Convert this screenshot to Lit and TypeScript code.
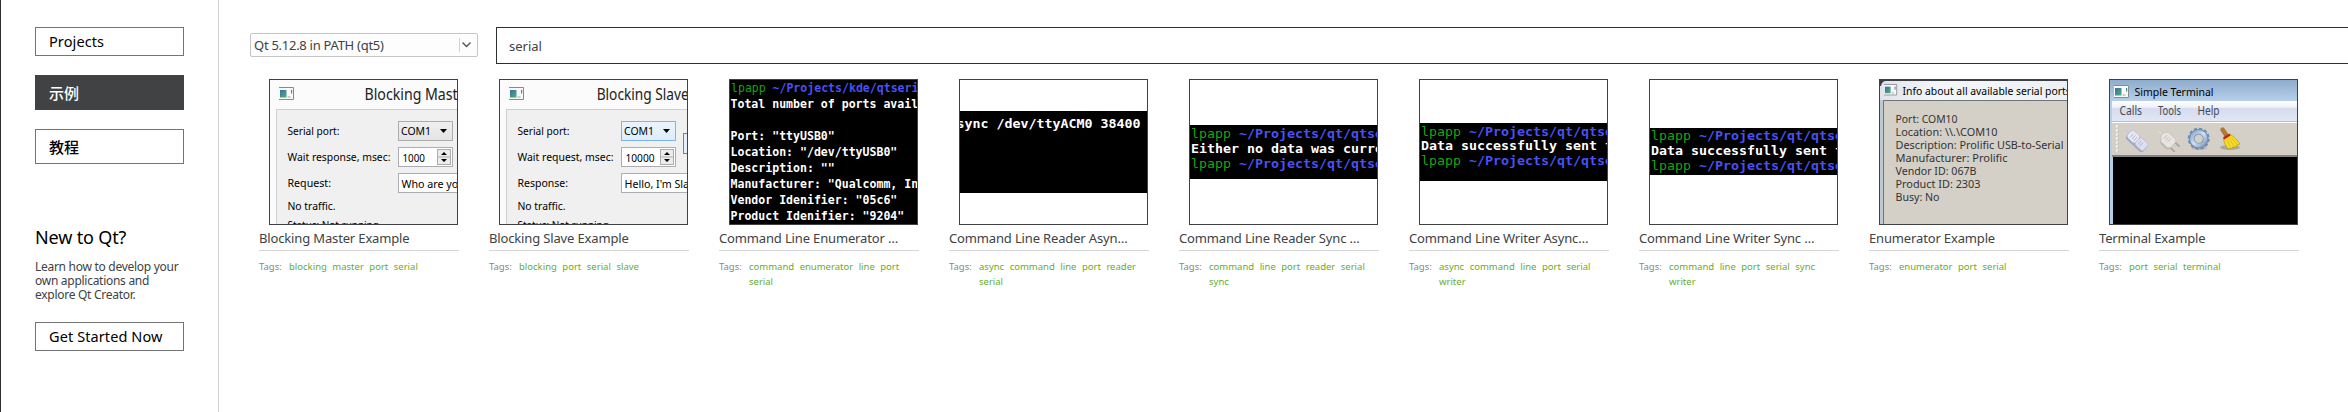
import { LitElement, html, svg, css } from "lit";
import { customElement, property } from "lit/decorators.js";

interface Example {
  title: string;
  tags: string[][];
  art: string;
}

const EXAMPLES: Example[] = [
  { title: "Blocking Master Example", tags: [["blocking", "master", "port", "serial"]], art: "master" },
  { title: "Blocking Slave Example", tags: [["blocking", "port", "serial", "slave"]], art: "slave" },
  { title: "Command Line Enumerator …", tags: [["command", "enumerator", "line", "port"], ["serial"]], art: "enum" },
  { title: "Command Line Reader Asyn…", tags: [["async", "command", "line", "port", "reader"], ["serial"]], art: "readasync" },
  { title: "Command Line Reader Sync …", tags: [["command", "line", "port", "reader", "serial"], ["sync"]], art: "readsync" },
  { title: "Command Line Writer Async…", tags: [["async", "command", "line", "port", "serial"], ["writer"]], art: "writeasync" },
  { title: "Command Line Writer Sync …", tags: [["command", "line", "port", "serial", "sync"], ["writer"]], art: "writesync" },
  { title: "Enumerator Example", tags: [["enumerator", "port", "serial"]], art: "info" },
  { title: "Terminal Example", tags: [["port", "serial", "terminal"]], art: "terminal" },
];

const label = (x: number, y: number, w: number, s: string, cls = "win") =>
  svg`<text class=${cls} x=${x} y=${y} textLength=${w} lengthAdjust="spacingAndGlyphs">${s}</text>`;

const mono = (x: number, y: number, pitch: number, s: string, cls: string) =>
  svg`<text class=${cls} x=${x} y=${y} textLength=${pitch * s.length} lengthAdjust="spacingAndGlyphs">${s}</text>`;

const windowIcon = (x: number, y: number) => svg`
  <g transform="translate(${x} ${y})">
    <rect x="0" y="0" width="15" height="13" fill="#f9f9f9"></rect>
    <path d="M0 .5H14.500V12.500H0" fill="none" stroke="#868a8d"></path>
    <rect x="1" y="3" width="6.500" height="7.500" fill="url(#pic)"></rect>
    <rect x="12" y="3" width="1.200" height="3.500" fill="url(#pic)"></rect>
    <rect x="8.500" y="9" width="3" height="2" fill="#cfcfcf"></rect>
  </g>`;

const serialDialog = (o: {
  title: string; titleX: number; titleW: number; wait: string; waitW: number; value: string; valueW: number;
  third: string; thirdW: number; text: string; textW: number; fx: number; active: boolean;
}) => svg`
  <rect width="187" height="144" fill="#fbfbfb"></rect>
  <rect x="6.5" y="29.5" width="200" height="130" fill="#f0f0f0" stroke="#cfcfcf"></rect>
  ${windowIcon(9, 7)}
  ${label(o.titleX, 20, o.titleW, o.title, "caption")}
  ${label(17.5, 54.7, 52, "Serial port:")}
  ${label(17.5, 81, o.waitW, o.wait)}
  ${label(17.5, 107, o.thirdW, o.third)}
  ${label(17.5, 129.7, 48, "No traffic.")}
  ${label(17.5, 148.5, 94, "Status: Not running.")}
  <g transform="translate(${o.fx} 0)">
    <rect x="0.5" y="41.5" width="54" height="19" fill=${o.active ? "url(#hot)" : "url(#cold)"} stroke=${o.active ? "#7eb4ea" : "#acacac"}></rect>
    ${label(3, 55, 30, "COM1")}
    <path d="M42 49h7l-3.5 4z" fill="#000"></path>
    <rect x="0.5" y="67.5" width="54" height="19" fill="#fff" stroke="#abadb3"></rect>
    ${label(4.5, 82, o.valueW, o.value)}
    <rect x="39.5" y="69.5" width="13" height="15" fill="#ececec" stroke="#acacac"></rect>
    <path d="M39.500 77h13" stroke="#acacac"></path>
    <path d="M43 75h6l-3-3zM43 79h6l-3 3z" fill="#000"></path>
    <rect x="0.5" y="93.500" width="100" height="19" fill="#fff" stroke="#abadb3"></rect>
    ${label(3.5, 108, o.textW, o.text)}
  </g>
  ${o.active ? svg`<rect x="183.5" y="53.5" width="30" height="20" fill="#e5eff9" stroke="#3c8ce0"></rect>` : null}`;

const shellBand = (top: number, bottom: number, lines: number[], message: string) => svg`
  <rect width="187" height="144" fill="#fff"></rect>
  <rect y=${top} width="187" height=${bottom - top} fill="#000"></rect>
  ${mono(1, lines[0], 8, "lpapp", "sh green")}
  ${mono(49, lines[0], 8, "~/Projects/qt/qtserial", "sh blue bold")}
  ${mono(1, lines[1], 8, message, "sh white bold")}
  ${mono(1, lines[2], 8, "lpapp", "sh green")}
  ${mono(49, lines[2], 8, "~/Projects/qt/qtserial", "sh blue bold")}`;

const TTY = 6.95;

const art: Record<string, () => unknown> = {
  master: () => serialDialog({
    title: "Blocking Master", titleX: 94.5, titleW: 107, wait: "Wait response, msec:", waitW: 103, value: "1000", valueW: 22.5,
    third: "Request:", thirdW: 43.5, text: "Who are you?", textW: 68, fx: 128, active: false,
  }),
  slave: () => serialDialog({
    title: "Blocking Slave", titleX: 96.7, titleW: 92, wait: "Wait request, msec:", waitW: 96, value: "10000", valueW: 29,
    third: "Response:", thirdW: 50.5, text: "Hello, I'm Slave", textW: 76, fx: 121, active: true,
  }),
  enum: () => svg`
    <rect width="187" height="144" fill="#000"></rect>
    ${mono(1, 12, TTY, "lpapp", "tty green")}
    ${mono(42.500, 12, TTY, "~/Projects/kde/qtserialport", "tty blue bold")}
    ${mono(0.5, 28, TTY, "Total number of ports available", "tty white bold")}
    ${mono(0.5, 60, TTY, 'Port: "ttyUSB0"', "tty white bold")}
    ${mono(0.5, 76, TTY, 'Location: "/dev/ttyUSB0"', "tty white bold")}
    ${mono(0.5, 92, TTY, 'Description: ""', "tty white bold")}
    ${mono(0.5, 108, TTY, 'Manufacturer: "Qualcomm, Inc', "tty white bold")}
    ${mono(0.5, 124, TTY, 'Vendor Idenifier: "05c6"', "tty white bold")}
    ${mono(0.5, 140, TTY, 'Product Idenifier: "9204"', "tty white bold")}`,
  readasync: () => svg`
    <rect width="187" height="144" fill="#fff"></rect>
    <rect y="31" width="187" height="82" fill="#000"></rect>
    ${mono(-3.500, 47.5, 8, "sync /dev/ttyACM0 38400", "sh white bold")}`,
  readsync: () => shellBand(45, 99, [58.3, 73, 88], "Either no data was currently"),
  writeasync: () => shellBand(43, 101, [55.5, 70.3, 85.3], "Data successfully sent to"),
  writesync: () => shellBand(48, 95, [60.3, 75.3, 90.3], "Data successfully sent to"),
  info: () => svg`
    <rect width="187" height="144" fill="url(#aero)"></rect>
    <path d="M0 6V0H187V1H6Q2 1 1 6z" fill="#3c4045"></path>
    <rect y="20" width="4" height="124" fill="#bfc8d2"></rect>
    <rect x="4" y="21" width="183" height="123" fill="#d4d0c8"></rect>
    <path d="M3.500 144V20.500H187" fill="none" stroke="#6f7478"></path>
    <g transform="translate(4 4) scale(.88)">${windowIcon(0, 0)}</g>
    ${label(22.500, 14.700, 171, "Info about all available serial ports.")}
    ${label(15.500, 42.700, 62, "Port: COM10", "info")}
    ${label(15.500, 55.700, 102, "Location: \\\\.\\COM10", "info")}
    ${label(15.500, 68.700, 168, "Description: Prolific USB-to-Serial", "info")}
    ${label(15.500, 81.700, 112, "Manufacturer: Prolific", "info")}
    ${label(15.500, 94.700, 81, "Vendor ID: 067B", "info")}
    ${label(15.500, 107.700, 85, "Product ID: 2303", "info")}
    ${label(15.500, 120.700, 44, "Busy: No", "info")}`,
  terminal: () => svg`
    <rect width="187" height="144" fill="#b4cde8"></rect>
    <rect width="187" height="22" fill="url(#sky)"></rect>
    ${windowIcon(4, 5)}
    ${label(24.500, 16, 79, "Simple Terminal")}
    <rect x="2" y="21" width="185" height="21" fill="url(#menu)"></rect>
    ${label(9.500, 34.700, 22.500, "Calls", "info menu")}
    ${label(48, 34.700, 23, "Tools", "info menu")}
    ${label(87.500, 34.700, 22, "Help", "info menu")}
    <rect x="2" y="41" width="185" height="1" fill="#b9bed0"></rect>
    <rect x="2" y="42" width="185" height="1" fill="#fff"></rect>
    <rect x="2" y="43" width="185" height="33" fill="#d4d0c8"></rect>
    <path d="M7 45.500V73" stroke="#fff" stroke-width="2" stroke-dasharray="2 2"></path>
    <path d="M8 46.500V73" stroke="#a5a29b" stroke-width="1" stroke-dasharray="1 3"></path>
    <rect x="2" y="75" width="185" height="2" fill="#85837f"></rect>
    <rect x="3" y="77" width="184" height="67" fill="#000"></rect>
    <path d="M16 50l3 3" stroke="#c9cadb" stroke-width="1.500"></path>
    <g transform="translate(27 61) rotate(43)">
      <rect x="-11" y="-4" width="22.500" height="10" rx="2.500" fill="#a3a5c2"></rect>
      <rect x="-11" y="-5.500" width="11" height="9.500" rx="2.500" fill="#e9eaf5" stroke="#b5b7d0" stroke-width=".7"></rect>
      <rect x="0" y="-5.500" width="11" height="9.500" rx="2" fill="#dfe0ef" stroke="#b5b7d0" stroke-width=".7"></rect>
      <path d="M-7.500-3v5M-5-3v5M-2.500-3v5M3-3v5M5.500-3v5" stroke="#aaadc8" stroke-width=".9"></path>
    </g>
    <path d="M48 51l4 3" stroke="#dedbd6" stroke-width="1.500"></path>
    <g transform="translate(58 60) rotate(43)">
      <path d="M5-3h8M5 4h8" stroke="#a8a5a0" stroke-width="1.800"></path>
      <path d="M-8-3l3-3H5l2 2V6l-2 2H-3l-5-6z" fill="#bbb7b0"></path>
      <path d="M-8-3l3-3H5l2 2V4L5 6H-4l-4-4z" fill="#e8e5e0" stroke="#c3bfb8" stroke-width=".7"></path>
      <path d="M-4-3v5M-1.500-3v5M1-3v5" stroke="#bfbbb5" stroke-width=".9"></path>
    </g>
    <ellipse cx="89" cy="68" rx="8" ry="2" fill="#aaa8a2" opacity=".6"></ellipse>
    <circle cx="88.700" cy="58.700" r="9.500" fill="none" stroke="#6f8db5" stroke-width="3" stroke-dasharray="3.100 1.874"></circle>
    <circle cx="88.700" cy="58.700" r="7" fill="none" stroke="#6f8db5" stroke-width="5.600"></circle>
    <circle cx="88.700" cy="58.700" r="6.800" fill="none" stroke="url(#steel)" stroke-width="3.800"></circle>
    <ellipse cx="120" cy="67.500" rx="10" ry="2.500" fill="#999589" opacity=".7"></ellipse>
    <path d="M112.500 49.500l4 6" stroke="#b07a35" stroke-width="4.500" stroke-linecap="round"></path>
    <path d="M113.500 59l7-4.500q5 3 9.500 9.500l-3 1-1 2-3 0-2 2-4-1q-3-5-3.500-9z" fill="#f6dc2a" stroke="#b99a0b" stroke-width=".7"></path>
    <path d="M117 60l4 8M119.500 59l5 8M121.500 58l6 7" stroke="#d3b312" stroke-width=".7"></path>
    <path d="M113.500 58.500l6.500-4" stroke="#c51d1d" stroke-width="2.500"></path>`,
};

@customElement("example-thumb")
class ExampleThumb extends LitElement {
  @property() kind = "";
  static styles = css`
    :host { display: block; }
    svg { display: block; width: 187px; height: 144px; }
    text { white-space: pre; }
    .win { font: 11px "Noto Sans", sans-serif; fill: #000; }
    .caption { font: 15.5px "Noto Sans", sans-serif; fill: #222; }
    .info { font: 11px "Noto Sans", sans-serif; fill: #333; }
    .menu { font-size: 12px; fill: #444a58; }
    .tty { font: 11.600px "DejaVu Sans Mono", monospace; }
    .sh { font: 13px "DejaVu Sans Mono", monospace; }
    .bold { font-weight: bold; }
    .green { fill: #18a418; }
    .blue { fill: #4a50f4; }
    .white { fill: #fff; }
  `;
  render() {
    return html`<svg viewBox="0 0 187 144">
      <defs>
        <linearGradient id="pic" x2="1" y2="1"><stop stop-color="#3a6ea8"></stop><stop offset="1" stop-color="#4fae7c"></stop></linearGradient>
        <linearGradient id="cold" x2="0" y2="1"><stop stop-color="#f0f0f0"></stop><stop offset="1" stop-color="#e3e3e3"></stop></linearGradient>
        <linearGradient id="hot" x2="0" y2="1"><stop stop-color="#ecf4fc"></stop><stop offset="1" stop-color="#dcecfc"></stop></linearGradient>
        <linearGradient id="aero"><stop stop-color="#dfe4ea"></stop><stop offset=".3" stop-color="#f4f6f8"></stop><stop offset="1" stop-color="#eef1f4"></stop></linearGradient>
        <linearGradient id="sky" x2="0" y2="1"><stop stop-color="#8eaccd"></stop><stop offset="1" stop-color="#b8d1ec"></stop></linearGradient>
        <linearGradient id="menu" x2="0" y2="1"><stop stop-color="#fff"></stop><stop offset=".3" stop-color="#eef1f9"></stop><stop offset=".36" stop-color="#d6dcee"></stop><stop offset="1" stop-color="#e3e7f6"></stop></linearGradient>
        <linearGradient id="steel" x2="1" y2="1"><stop stop-color="#8fa9cb"></stop><stop offset=".5" stop-color="#d3dfed"></stop><stop offset="1" stop-color="#7f9bc1"></stop></linearGradient>
      </defs>
      ${art[this.kind]?.()}
    </svg>`;
  }
}

@customElement("example-card")
class ExampleCard extends LitElement {
  @property({ attribute: false }) item!: Example;
  static styles = css`
    :host { display: block; width: 200px; }
    .frame { margin-left: 10px; width: 187px; height: 144px; border: 1px solid #404244; overflow: hidden; }
    .title { height: 25px; line-height: 27px; font-size: 13px; letter-spacing: -0.15px; color: #404244; white-space: nowrap; border-bottom: 1px solid #d6d6d6; }
    .tags { display: flex; gap: 7px; margin-top: 8px; font-size: 9.5px; line-height: 15px; white-space: nowrap; }
    .label { color: #868788; width: 23px; }
    .row { display: flex; gap: 5.5px; color: #67ac2c; }
  `;
  render() {
    return html`
      <div class="frame"><example-thumb .kind=${this.item.art}></example-thumb></div>
      <div class="title">${this.item.title}</div>
      <div class="tags">
        <span class="label">Tags:</span>
        <div>${this.item.tags.map((r) => html`<div class="row">${r.map((t) => html`<span>${t}</span>`)}</div>`)}</div>
      </div>`;
  }
}

@customElement("app-root")
class AppRoot extends LitElement {
  static styles = css`
    :host { display: flex; height: 412px; background: #fff; overflow: hidden; box-sizing: border-box; border-left: 1px solid #2e2f30;
      font-family: "Noto Sans", "Noto Sans CJK SC", sans-serif; color: #404244; }
    .side { box-sizing: border-box; width: 218px; flex: none; padding: 27px 34px 0; border-right: 1px solid #d0d0d0; }
    .btn { box-sizing: border-box; width: 149px; height: 29px; border: 1px solid #727476; padding-left: 13px; line-height: 27px; font-size: 14.5px; letter-spacing: 0.1px; color: #000; white-space: nowrap; }
    .tall { height: 35px; line-height: 34px; margin-top: 19px; font-size: 15px; letter-spacing: 0; font-weight: 500; }
    .on { background: #404244; border-color: #404244; color: #fff; }
    .new { margin-top: 60px; line-height: 26px; font-size: 18px; letter-spacing: -0.15px; color: #000; white-space: nowrap; }
    .about { margin: 10px 0 20px; font-size: 12px; letter-spacing: -0.28px; line-height: 14px; white-space: nowrap; }
    .main { flex: none; width: 2129px; }
    .bar { display: flex; padding: 27px 0 0 31px; gap: 18px; }
    .select { box-sizing: border-box; width: 228px; height: 24px; margin-top: 6px; border: 1px solid #c4c6c6; border-radius: 2px; background: #fcfdfc;
      display: flex; align-items: center; justify-content: space-between; padding: 0 6px 0 3px; font-size: 13px; letter-spacing: -0.27px; }
    .search { box-sizing: border-box; flex: 1; height: 37px; border: 1px solid #2e2f30; border-right: 0; padding-left: 12px; line-height: 36px; font-size: 13px; }
    .cards { display: flex; gap: 30px; padding: 15px 0 0 40px; }
  `;
  render() {
    return html`
      <div class="side">
        <div class="btn">Projects</div>
        <div class="btn tall on">示例</div>
        <div class="btn tall">教程</div>
        <div class="new">New to Qt?</div>
        <div class="about">Learn how to develop your<br>own applications and<br>explore Qt Creator.</div>
        <div class="btn">Get Started Now</div>
      </div>
      <div class="main">
        <div class="bar">
          <div class="select">
            <span>Qt 5.12.8 in PATH (qt5)</span>
            <svg width="12" height="14" fill="none"><path d="M.5 0v14" stroke="#d0d0d0"></path><path d="M3.500 4.500l4 4 4-4" stroke="#555" stroke-width="1.400"></path></svg>
          </div>
          <div class="search">serial</div>
        </div>
        <div class="cards">${EXAMPLES.map((e) => html`<example-card .item=${e}></example-card>`)}</div>
      </div>`;
  }
}
